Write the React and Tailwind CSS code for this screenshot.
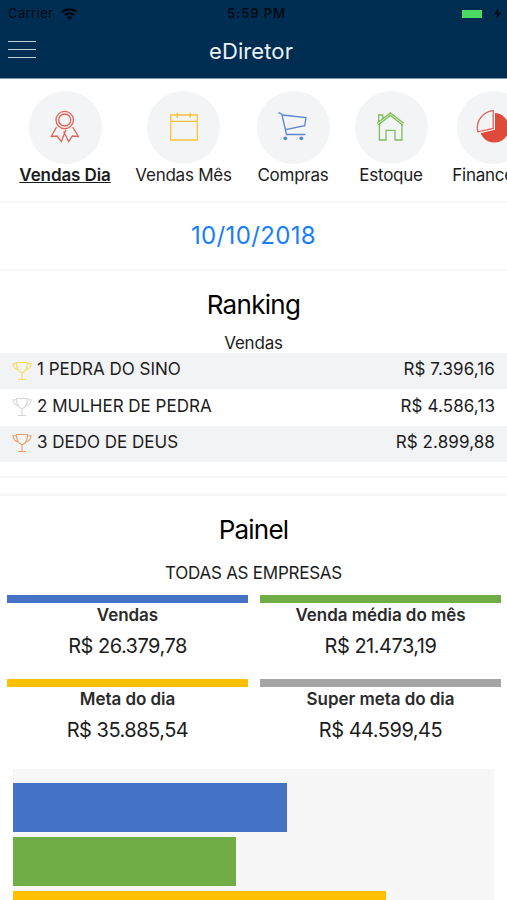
import React from "react";

const tabs = [
  { label: "Vendas Dia", icon: "ribbon", width: "w-[91px]", active: true },
  { label: "Vendas Mês", icon: "calendar", width: "w-24" },
  { label: "Compras", icon: "cart", width: "w-[73px]" },
  { label: "Estoque", icon: "home", width: "w-[73px]" },
  { label: "Financeiro", icon: "pie", width: "w-[81px]" },
];

const ranking = [
  { pos: 1, name: "PEDRA DO SINO", total: "R$ 7.396,16", color: "text-[#f8dc5a]" },
  { pos: 2, name: "MULHER DE PEDRA", total: "R$ 4.586,13", color: "text-[#d6d6d8]" },
  { pos: 3, name: "DEDO DE DEUS", total: "R$ 2.899,88", color: "text-[#e5a06a]" },
];

const metrics = [
  { label: "Vendas", value: "R$ 26.379,78", bar: "bg-[#4472c4]" },
  { label: "Venda média do mês", value: "R$ 21.473,19", bar: "bg-[#70ad47]" },
  { label: "Meta do dia", value: "R$ 35.885,54", bar: "bg-[#ffc000]" },
  { label: "Super meta do dia", value: "R$ 44.599,45", bar: "bg-[#a5a5a5]" },
];

const chart = [
  { value: 26379.78, color: "bg-[#4472c4]" },
  { value: 21473.19, color: "bg-[#70ad47]" },
  { value: 35885.54, color: "bg-[#ffc000]" },
];

const TabIcon = ({ name }) => {
  const props = {
    viewBox: "0 0 32 32",
    className: "w-8 h-8 overflow-visible",
    fill: "none",
    strokeWidth: 1.3,
  };
  if (name === "ribbon")
    return (
      <svg {...props} stroke="#e2625a">
        <circle cx="15.7" cy="8" r="8.7" />
        <circle cx="15.7" cy="8" r="6" />
        <path d="M7.6 15 2.3 24.5 8 24l4.3 5.5 4.6-11.8M14.6 19.5l5.1 10 3.7-5.5 5.9.4L23.7 15" />
      </svg>
    );
  if (name === "calendar")
    return (
      <svg {...props} stroke="#f9c43c">
        <path d="M2.7 3h26.6v25H2.7zM2.7 9.3h26.6M9.3.6V6M22.3.6V6" />
      </svg>
    );
  if (name === "cart")
    return (
      <svg {...props} stroke="#5b84cf">
        <path d="M1.3.7 4.8 2l4.7 20.5h18.8M5.2 3 29 5.5l-1.3 8.2-19.2 4" />
        <circle cx="8.3" cy="26.3" r="1.9" fill="#5b84cf" stroke="none" />
        <circle cx="24.3" cy="26.3" r="1.9" fill="#5b84cf" stroke="none" />
      </svg>
    );
  if (name === "home")
    return (
      <svg {...props} stroke="#7fbc5a">
        <path d="M2 11.2 15.4.9l13.3 10.3M3 13l12.4-9.6L27.7 13M3.7 9.7V3h4v3.6" />
        <path d="M4.4 11.8V28H11v-9.6h9V28h6.9V11.8" />
      </svg>
    );
  return (
    <svg {...props}>
      <circle cx="17.3" cy="15.8" r="14.7" fill="#e04a3a" />
      <path
        d="M16.2-1.3v17.7L1.4 19.8A17.2 17.2 0 0 1 16.2-1.3z"
        fill="#f3f4f5"
        stroke="#f3f4f5"
        strokeWidth="3.6"
      />
      <path d="M16.2-1.3v17.7L.8 19.8A17.2 17.2 0 0 1 16.2-1.3z" fill="#f3f4f5" stroke="#e2625a" />
    </svg>
  );
};

const Trophy = ({ className }) => (
  <svg
    viewBox="0 0 20 20"
    className={`w-5 h-5 -mt-px overflow-visible ${className}`}
    fill="none"
    stroke="currentColor"
    strokeWidth="1.1"
  >
    <path d="M4.5 1.5h11c0 5-1 9-5.5 10.2C5.5 10.5 4.5 6.5 4.5 1.5zM10 11.7v6.6M6 18.5h8" />
    <path d="M4.5 2.7H1c.2 3.5 1.5 5.3 4.8 5.9M15.5 2.7H19c-.2 3.5-1.5 5.3-4.8 5.9" />
  </svg>
);

const Header = () => (
  <header className="h-[79px] bg-[#002d52] border-b border-[#8296a9]">
    <div className="h-[27px] px-2 grid grid-cols-3 items-center text-[13px] text-[#020b14]">
      <div className="flex items-center gap-2">
        <span className="tracking-[0.4px]">Carrier</span>
        <svg viewBox="0 0 17 12" className="w-[17px] h-3" fill="none" stroke="currentColor" strokeWidth="2.2">
          <path d="M1 4.3a11 11 0 0 1 15 0M3.7 7.2a7 7 0 0 1 9.6 0" />
          <path d="M8.5 11.8 5.9 9.2a3.8 3.8 0 0 1 5.2 0z" fill="currentColor" stroke="none" />
        </svg>
      </div>
      <span className="text-center font-semibold tracking-[0.9px] pl-[6px]">5:59 PM</span>
      <div className="flex items-center justify-end">
        <div className="w-[26px] h-3 border border-[#03274a] rounded-[3px] p-px">
          <div className="w-5 h-full bg-[#4cd964]" />
        </div>
        <svg viewBox="0 0 7 11" className="w-[7px] h-[11px] ml-[8px] -mr-[2px]" fill="currentColor">
          <path d="M4.5 0 0 6.2h3L2.3 11 7 4.6H4z" />
        </svg>
      </div>
    </div>
    <div className="h-[51px] px-2 grid grid-cols-[28px_1fr_28px] items-center">
      <div className="flex flex-col gap-[7px] -mt-[7px]">
        <div className="h-px bg-[#c3cfd9]" />
        <div className="h-px bg-[#c3cfd9]" />
        <div className="h-px bg-[#c3cfd9]" />
      </div>
      <h1 className="text-center text-[22px] tracking-[0.1px] text-[#eef2f6] -mt-[2px] -ml-[5px]">eDiretor</h1>
    </div>
  </header>
);

const App = () => {
  const scale = 274 / chart[0].value;

  return (
    <div className="w-full h-[900px] overflow-hidden bg-white text-[#1c1c1c] font-['Inter',sans-serif]">
      <Header />

      <nav className="h-[122px] pt-3 pl-[19.5px] flex gap-[25px] overflow-hidden">
        {tabs.map((tab) => (
          <div key={tab.label} className={`${tab.width} shrink-0 flex flex-col items-center`}>
            <div className="w-[73px] h-[73px] shrink-0 rounded-full bg-[#f3f4f5] flex items-center justify-center">
              <TabIcon name={tab.icon} />
            </div>
            <span
              className={`text-[17px] leading-[22px] whitespace-nowrap ${
                tab.active ? "font-semibold underline tracking-[-0.1px]" : "tracking-[-0.25px]"
              }`}
            >
              {tab.label}
            </span>
          </div>
        ))}
      </nav>

      <div className="h-[70px] border-y-2 border-[#f6f6f7] flex items-center justify-center text-[24px] tracking-[0.35px] text-[#157efb]">
        10/10/2018
      </div>

      <section className="pt-4 h-[205px]">
        <h2 className="text-center text-[26px] leading-[36px] tracking-[-0.7px] text-black">Ranking</h2>
        <p className="text-center text-[17px] leading-[22px] tracking-[-0.2px] pt-[9px] h-[30px]">Vendas</p>
        {ranking.map((r, i) => (
          <div
            key={r.pos}
            className={`h-[36.25px] px-3 flex items-center text-[17px] ${i % 2 === 0 ? "bg-[#f2f3f5]" : ""}`}
          >
            <Trophy className={r.color} />
            <span className="ml-[5px] -mt-[2px] flex-1">
              {r.pos} {r.name}
            </span>
            <span className="-mt-[2px] tracking-[0.1px]">{r.total}</span>
          </div>
        ))}
      </section>

      <div className="h-5 border-y-2 border-[#f6f6f7]" />

      <section>
        <h2 className="pt-4 text-center text-[26px] leading-[36px] tracking-[-0.8px] text-black">Painel</h2>
        <p className="pt-[14px] text-center text-[17px] leading-[22px] tracking-[-0.25px] h-[47px]">TODAS AS EMPRESAS</p>
        <div className="pl-[7px] pr-[6px] grid grid-cols-2 gap-x-3">
          {metrics.map((m) => (
            <div key={m.label} className="h-[83.5px] text-center">
              <div className={`h-2 ${m.bar}`} />
              <h3 className="pt-[1px] text-[17px] leading-[22px] font-semibold tracking-[-0.05px] text-[#2b2b2b]">
                {m.label}
              </h3>
              <p className="pt-[7px] text-[20px] leading-[26px] tracking-[-0.5px]">{m.value}</p>
            </div>
          ))}
        </div>
        <div className="mt-[7px] mx-[13px] h-[160px] pt-[14px] bg-[#f7f7f7] flex flex-col gap-[5px]">
          {chart.map((c) => (
            <div key={c.value} className={`h-[49px] shrink-0 ${c.color}`} style={{ width: c.value * scale }} />
          ))}
        </div>
      </section>
    </div>
  );
};

export default App;
